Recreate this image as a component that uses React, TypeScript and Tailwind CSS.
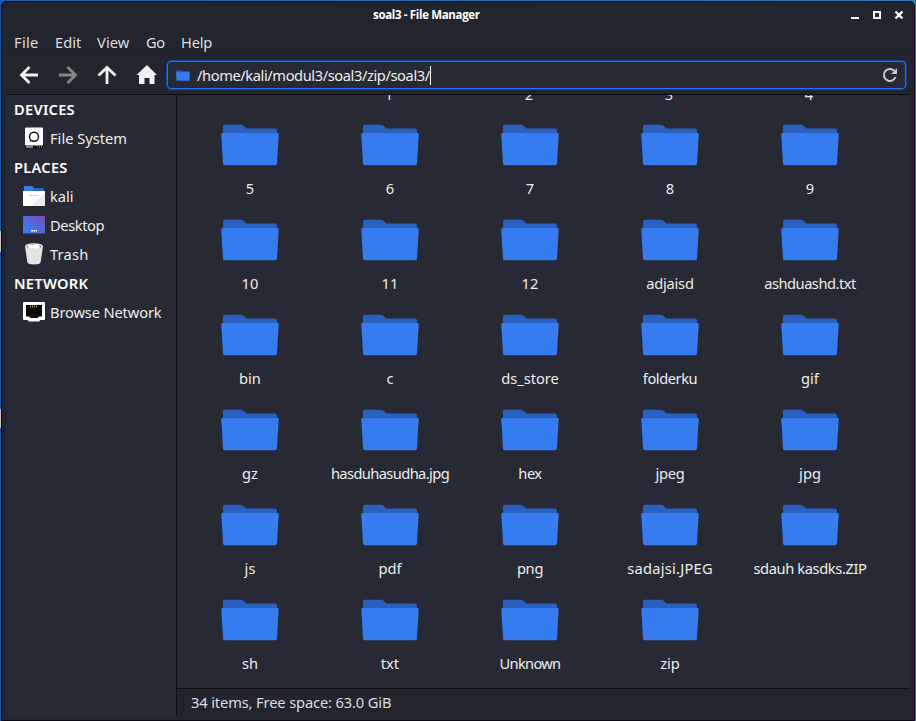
import React from 'react';

const rows: string[][] = [
  ['1', '2', '3', '4'],
  ['5', '6', '7', '8', '9'],
  ['10', '11', '12', 'adjaisd', 'ashduashd.txt'],
  ['bin', 'c', 'ds_store', 'folderku', 'gif'],
  ['gz', 'hasduhasudha.jpg', 'hex', 'jpeg', 'jpg'],
  ['js', 'pdf', 'png', 'sadajsi.JPEG', 'sdauh kasdks.ZIP'],
  ['sh', 'txt', 'Unknown', 'zip'],
];

const tracking: Record<string, string> = {
  adjaisd: 'tracking-[-0.25px]',
  'ashduashd.txt': 'tracking-[-0.5px]',
  folderku: 'tracking-[-0.45px]',
  'hasduhasudha.jpg': 'tracking-[-0.6px]',
  jpeg: 'tracking-[-0.3px]',
  'sadajsi.JPEG': 'tracking-[0.25px]',
  'sdauh kasdks.ZIP': 'tracking-[-0.38px]',
  Unknown: 'tracking-[-0.7px]',
  hex: 'tracking-[-0.5px]',
  png: 'tracking-[-0.3px]',
};

function Folder({ className }: { className: string }) {
  return (
    <svg className={className} viewBox="0 0 58 42" preserveAspectRatio="none">
      <path d="M2 11V2.500Q2 .8 3.800 .8H20Q21.500 .8 22.500 1.800L25.500 4.500H54Q56 4.500 56 6.500V11Z" fill="#2a60bf" />
      <path d="M1.500 9H56.500Q57.700 9 57.700 10.300L56 39.500Q55.900 41.200 54.200 41.200H3.800Q2.100 41.200 2 39.500L.3 10.300Q.3 9 1.500 9Z" fill="#367bf0" />
    </svg>
  );
}

function DriveIcon() {
  return (
    <svg className="h-[24px] w-[24px]" viewBox="0 0 24 24">
      <path d="M3 17H21V20.500Q21 21.500 20 21.500H4Q3 21.500 3 20.500Z" fill="#090909" />
      <path d="M4 20H11" stroke="#fff" strokeWidth="1" />
      <path d="M15 20H20" stroke="#bbb" strokeWidth="1" strokeDasharray="1 1" />
      <rect x="3" y=".5" width="18" height="18" rx="1" fill="#fff" />
      <circle cx="12" cy="9.800" r="4.500" fill="none" stroke="#111" strokeWidth="1.400" />
      <path d="M7.500 15L9.500 13" stroke="#111" />
    </svg>
  );
}

function HomeFolderIcon() {
  return (
    <svg className="h-[24px] w-[24px]" viewBox="0 0 24 24">
      <path d="M2 8V2Q2 1 3 1H10L12 3H21Q22 3 22 4V8Z" fill="#2a65cd" />
      <path d="M2 6V2Q2 1 3 1H10L12 3L10 6Z" fill="#367bf0" />
      <path d="M1 6H23V20Q23 21 22 21H2Q1 21 1 20Z" fill="#fff" />
      <path d="M23 8V21H9Z" fill="#ececec" />
      <path d="M7 10.500H16" stroke="#d0d0d0" strokeWidth="1" />
    </svg>
  );
}

function DesktopIcon() {
  return (
    <svg className="h-[24px] w-[24px]" viewBox="0 0 24 24">
      <defs>
        <linearGradient id="desk" x1="0" y1="1" x2="1" y2="0">
          <stop offset="0.200" stopColor="#367bf0" />
          <stop offset="1" stopColor="#7d4bb0" />
        </linearGradient>
      </defs>
      <rect x="1" y="2" width="22" height="18" rx="1" fill="url(#desk)" />
      <path d="M1.500 19.500H22.500" stroke="#26489e" />
      <path d="M9 16.800H11M11.500 16.800H13M13.500 16.800H15" stroke="#fff" strokeWidth="1.600" />
    </svg>
  );
}

function TrashIcon() {
  return (
    <svg className="h-[24px] w-[24px]" viewBox="0 0 24 24">
      <path d="M3 3L5.300 19Q5.700 21.500 12 21.500T18.700 19L21 3Z" fill="#e3e3e3" />
      <ellipse cx="12" cy="3.200" rx="9" ry="3" fill="#e6e6e6" />
      <ellipse cx="12" cy="3.600" rx="7.800" ry="2.300" fill="#b5b5b5" />
      <path d="M5 4L7 1.500L11 2.500L15 1L19 4Q15 7 12 5.500Q8 6.500 5 4Z" fill="#fff" />
      <path d="M5 2.500L6.500 5" stroke="#e4b63c" strokeWidth="1.200" />
      <path d="M18 2.500L18.500 4.500" stroke="#48a8b5" strokeWidth="1.200" />
    </svg>
  );
}

function NetworkIcon() {
  return (
    <svg className="h-[24px] w-[24px]" viewBox="0 0 24 24">
      <path d="M2 1H22Q23 1 23 2V18Q23 19 22 19H18.500L17 20.500H7L5.500 19H2Q1 19 1 18V2Q1 1 2 1Z" fill="#fff" />
      <path d="M4 4H20V15.500H17L15.500 17H8.500L7 15.500H4Z" fill="#080808" />
      <path d="M8.500 4.500V6.500M10.500 4.500V6.500M12.500 4.500V6.500M14.500 4.500V6.500" stroke="#b69a45" strokeWidth="1" />
    </svg>
  );
}

function Place({ icon, label, spacing = '' }: { icon: React.ReactNode; label: string; spacing?: string }) {
  return (
    <div className="flex h-[29px] items-center pb-px pl-4">
      <div className="pt-px">{icon}</div>
      <span className={`ml-1 ${spacing}`}>{label}</span>
    </div>
  );
}

function Heading({ children }: { children: string }) {
  return <div className="h-[29px] pl-2 text-[14.667px] leading-[29px] font-semibold tracking-[0.25px] text-white">{children}</div>;
}

export default function App() {
  return (
    <div className="flex h-[721px] w-[916px] overflow-hidden bg-gradient-to-r from-[#1e5fb4] to-[#2482b2] font-['Noto_Sans','Open_Sans',sans-serif] text-[14.667px] leading-5 whitespace-nowrap text-[#ededed]">
      <div className="flex w-px shrink-0 flex-col bg-[#1e56ae]">
        <div className="mt-[231px] h-[21px] bg-[#c5c5bf]" />
        <div className="mt-[157px] h-[19px] bg-[#c5c5bf]" />
      </div>
      <div className="mt-px flex h-[720px] w-[914px] flex-col rounded-t-[5px] border border-[#0b0c11] bg-[#23252e] px-1">
        <header className="flex h-[27px] shrink-0 items-center pr-[6px] pb-px pl-[367px] font-['Open_Sans',sans-serif] text-[11.5px] font-bold text-white">
          <span className="tracking-[-0.34px]">soal3 - File Manager</span>
          <svg className="ml-auto h-3 w-[54px]" viewBox="0 0 54 12">
            <path d="M1 9H9" stroke="#fff" strokeWidth="2" />
            <rect x="24" y="3" width="6" height="6" fill="none" stroke="#fff" strokeWidth="2" />
            <path d="M45.500 2.500L52.500 9.500M52.500 2.500L45.500 9.500" stroke="#fff" strokeWidth="2.300" />
          </svg>
        </header>
        <nav className="flex h-[27px] shrink-0 items-center border-b border-[#20222a] pl-2 text-[#dedee0]">
          <span className="w-[41px] tracking-[0.3px]">File</span>
          <span className="w-[42px]">Edit</span>
          <span className="w-[49px] tracking-[0.1px]">View</span>
          <span className="w-[35px] tracking-[-0.3px]">Go</span>
          <span className="tracking-[-0.2px]">Help</span>
        </nav>
        <div className="flex h-[38px] shrink-0 items-center pr-[3px]">
          <svg className="h-[30px] w-[160px] shrink-0" viewBox="6 60 160 30" fill="none" strokeWidth="2.800">
            <path d="M38 75H22M29.500 67L21.500 75L29.500 83" stroke="#f0f0ee" />
            <path d="M59 75H75M67.500 67L75.500 75L67.500 83" stroke="#868688" />
            <path d="M107 84V68M98.500 75.500L107 67.500L115.500 75.500" stroke="#f0f0ee" />
            <path d="M147 65L157 75H154.500V84H149.500V78H144.500V84H139V75H136.500Z" fill="#f0f0ee" />
          </svg>
          <div className="flex h-[30px] min-w-0 flex-1 items-center rounded-[5px] border border-[#0b43a2] bg-[#272a34] pr-[8px] pl-[9px] shadow-[inset_0_0_0_1px_#2475f5]">
            <Folder className="h-[11px] w-[14px]" />
            <span className="ml-[7px] tracking-[-0.41px]">/home/kali/modul3/soal3/zip/soal3/</span>
            <span className="h-[19px] w-px bg-white" />
            <svg className="ml-auto h-4 w-4" viewBox="0 0 16 16">
              <path d="M13.500 10A6 6 0 1 1 12.200 3.800" fill="none" stroke="#c9c9c9" strokeWidth="2" />
              <path d="M15 1V7H9Z" fill="#c9c9c9" />
            </svg>
          </div>
        </div>
        <main className="flex h-[622px] shrink-0 border-t border-[#0d0e12]">
          <aside className="w-[171px] shrink-0 border-r border-[#0d0e12] bg-[#272a34]">
            <Heading>DEVICES</Heading>
            <Place icon={<DriveIcon />} label="File System" />
            <Heading>PLACES</Heading>
            <Place icon={<HomeFolderIcon />} label="kali" />
            <Place icon={<DesktopIcon />} label="Desktop" spacing="tracking-[-0.4px]" />
            <Place icon={<TrashIcon />} label="Trash" spacing="tracking-[0.2px]" />
            <Heading>NETWORK</Heading>
            <Place icon={<NetworkIcon />} label="Browse Network" spacing="tracking-[-0.14px]" />
          </aside>
          <section className="flex min-w-0 flex-1 flex-col">
            <div className="flex h-[593px] shrink-0 flex-col justify-end overflow-hidden bg-[#272a34] pb-[14px] pl-[3px]">
              {rows.map((row, index) => (
                <div key={row[0]} className={`flex h-[95px] shrink-0 ${index === 0 ? 'pl-[139px]' : ''}`}>
                  {row.map((name) => (
                    <div key={name} className="flex w-[140px] flex-col items-center pt-[20px]">
                      <Folder className="h-[42px] w-[58px] shrink-0" />
                      <span className={`${index === 0 ? 'mt-[13px]' : 'mt-[12px]'} ${tracking[name] ?? ''}`}>{name}</span>
                    </div>
                  ))}
                </div>
              ))}
            </div>
            <footer className="flex h-[28px] items-center border-t border-[#0d0e12] pb-[2px] pl-[14px] tracking-[-0.13px] text-[#dedee0]">34 items, Free space: 63.0 GiB</footer>
          </section>
        </main>
      </div>
    </div>
  );
}
